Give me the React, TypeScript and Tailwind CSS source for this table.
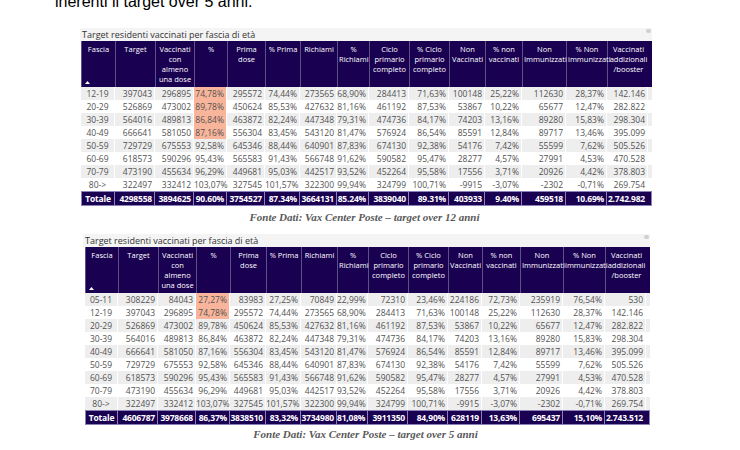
import React from "react";

type Row = string[];

const headers = [
  "Fascia",
  "Target",
  "Vaccinati con almeno una dose",
  "%",
  "Prima dose",
  "% Prima",
  "Richiami",
  "% Richiami",
  "Ciclo primario completo",
  "% Ciclo primario completo",
  "Non Vaccinati",
  "% non vaccinati",
  "Non Immunizzati",
  "% Non immunizzati",
  "Vaccinati addizionali /booster",
];

const common: Row[] = [
  ["12-19", "397043", "296895", "74,78%", "295572", "74,44%", "273565", "68,90%", "284413", "71,63%", "100148", "25,22%", "112630", "28,37%", "142.146"],
  ["20-29", "526869", "473002", "89,78%", "450624", "85,53%", "427632", "81,16%", "461192", "87,53%", "53867", "10,22%", "65677", "12,47%", "282.822"],
  ["30-39", "564016", "489813", "86,84%", "463872", "82,24%", "447348", "79,31%", "474736", "84,17%", "74203", "13,16%", "89280", "15,83%", "298.304"],
  ["40-49", "666641", "581050", "87,16%", "556304", "83,45%", "543120", "81,47%", "576924", "86,54%", "85591", "12,84%", "89717", "13,46%", "395.099"],
  ["50-59", "729729", "675553", "92,58%", "645346", "88,44%", "640901", "87,83%", "674130", "92,38%", "54176", "7,42%", "55599", "7,62%", "505.526"],
  ["60-69", "618573", "590296", "95,43%", "565583", "91,43%", "566748", "91,62%", "590582", "95,47%", "28277", "4,57%", "27991", "4,53%", "470.528"],
  ["70-79", "473190", "455634", "96,29%", "449681", "95,03%", "442517", "93,52%", "452264", "95,58%", "17556", "3,71%", "20926", "4,42%", "378.803"],
  ["80->", "322497", "332412", "103,07%", "327545", "101,57%", "322300", "99,94%", "324799", "100,71%", "-9915", "-3,07%", "-2302", "-0,71%", "269.754"],
];

const rows2: Row[] = [
  ["05-11", "308229", "84043", "27,27%", "83983", "27,25%", "70849", "22,99%", "72310", "23,46%", "224186", "72,73%", "235919", "76,54%", "530"],
  ...common,
];

const total1: Row = ["Totale", "4298558", "3894625", "90.60%", "3754527", "87.34%", "3664131", "85.24%", "3839040", "89.31%", "403933", "9.40%", "459518", "10.69%", "2.742.982"];
const total2: Row = ["Totale", "4606787", "3978668", "86,37%", "3838510", "83,32%", "3734980", "81,08%", "3911350", "84,90%", "628119", "13,63%", "695437", "15,10%", "2.743.512"];

const cols1 = [34, 40, 39, 33, 38, 35, 37, 32, 40, 40, 36, 37, 44, 41, 41];
const cols2 = [33, 40, 38, 34, 36, 35, 36, 31, 40, 40, 34, 38, 43, 42, 41];

function DataTable({
  cols,
  rows,
  total,
  highlight,
}: {
  cols: number[];
  rows: Row[];
  total: Row;
  highlight: number[];
}) {
  return (
    <div className="flex flex-col">
      <div className="flex h-[46px] bg-[#1a0051] border-l border-[#5d5288]">
        {headers.map((h, i) => (
          <div
            key={i}
            style={{ width: cols[i] }}
            className={
              "relative flex-none text-center text-white text-[7.5px] leading-[10px] pt-[3px] px-[1px] " +
              (i < headers.length - 1 ? "border-r border-[#5d5288]" : "")
            }
          >
            {h}
            {i === 0 && (
              <svg className="absolute left-[3px] bottom-[3px]" width="5" height="3" viewBox="0 0 5 3">
                <path d="M0 3 L2.5 0 L5 3 Z" fill="#ffffff" />
              </svg>
            )}
          </div>
        ))}
      </div>
      {rows.map((r, ri) => (
        <div key={ri} className={"flex h-[13px] " + (ri % 2 === 0 ? "bg-[#eeeeee]" : "bg-white")}>
          {r.map((c, ci) => (
            <div
              key={ci}
              style={{ width: cols[ci] }}
              className={
                "flex-none whitespace-nowrap text-[8.5px] leading-[13px] text-[#525252] border-r border-white " +
                (ci === 0 ? "text-center " : "text-right pr-[2px] ") +
                (ci === 3 && highlight.includes(ri) ? "bg-[#f9b59b]" : "")
              }
            >
              {c}
            </div>
          ))}
        </div>
      ))}
      <div className="flex h-[15px] bg-[#1a0051] border border-[#8a82b8]">
        {total.map((c, ci) => (
          <div
            key={ci}
            style={{ width: ci === 0 ? cols[ci] - 1 : ci === total.length - 1 ? cols[ci] - 1 : cols[ci] }}
            className={
              "flex-none whitespace-nowrap text-[8.5px] leading-[13px] font-bold text-white tracking-[-0.2px] " +
              (ci < total.length - 1 ? "border-r border-[#8a82b8] " : "") +
              (ci === 0 ? "text-center" : "text-right pr-[2px]")
            }
          >
            {c}
          </div>
        ))}
      </div>
    </div>
  );
}

function TitleBar({ width }: { width: number }) {
  return (
    <div
      style={{ width }}
      className="flex h-[13px] items-center justify-between bg-[#f4f4f4] pl-[2px] pr-[1px]"
    >
      <span className="text-[9px] leading-[12px] text-[#333333]">Target residenti vaccinati per fascia di età</span>
      <span className="mb-[8px] h-[4px] w-[5px] rounded-[2px] bg-[#cfcfcf]" />
    </div>
  );
}

export default function App() {
  return (
    <div className="relative h-[450px] w-[740px] overflow-hidden bg-white font-['Open_Sans',sans-serif]">
      <p className="ml-[55px] mt-[-7px] font-['Liberation_Sans',Arial,sans-serif] text-[16px] leading-[18px] text-black">
        inerenti il target over 5 anni.
      </p>

      <div className="ml-[80px] mt-[17px] flex w-[572px] flex-col">
        <TitleBar width={572} />
        <div className="ml-[1px]">
          <DataTable cols={cols1} rows={common} total={total1} highlight={[0, 1, 2, 3]} />
        </div>
      </div>
      <p className="ml-[81px] mt-[5px] w-[567px] text-center font-['Liberation_Serif',serif] text-[11px] font-bold italic leading-[12px] text-[#595959]">
        Fonte Dati: Vax Center Poste – target over 12 anni
      </p>

      <div className="ml-[83px] mt-[11px] flex w-[567px] flex-col">
        <TitleBar width={567} />
        <div className="ml-[2px]">
          <DataTable cols={cols2} rows={rows2} total={total2} highlight={[0, 1]} />
        </div>
      </div>
      <p className="ml-[85px] mt-[3px] w-[561px] text-center font-['Liberation_Serif',serif] text-[11px] font-bold italic leading-[12px] text-[#595959]">
        Fonte Dati: Vax Center Poste – target over 5 anni
      </p>
    </div>
  );
}
